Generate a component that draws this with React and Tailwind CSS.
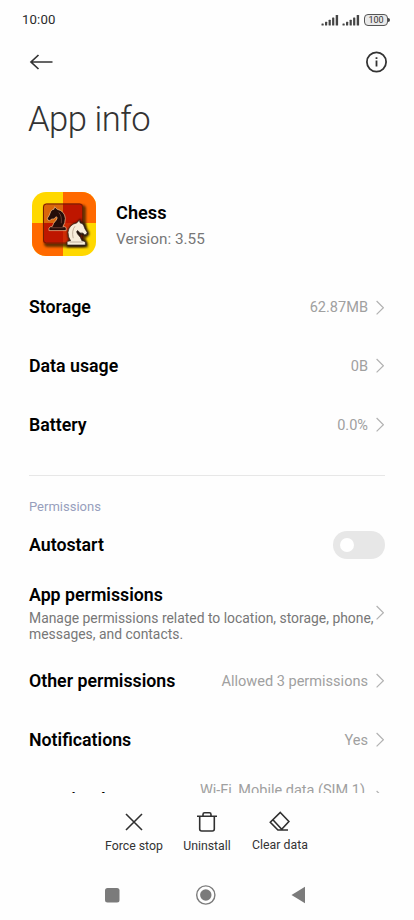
import React from 'react';

const storageRows = [
    { label: 'Storage', value: '62.87MB' },
    { label: 'Data usage', value: '0B' },
    { label: 'Battery', value: '0.0%' },
];

const permissionRows = [
    { label: 'Other permissions', value: 'Allowed 3 permissions' },
    { label: 'Notifications', value: 'Yes' },
];

const KNIGHT = 'M3 30 V27 Q4 25 7 25 Q8 21 12 17 Q14 14 12 13 Q9 17 6 16 L4 18 Q1 18 1 15 Q4 11 5 7 Q6 4 9 4 L10 1 L13 4 Q22 6 23 15 Q23 21 20 25 Q24 25 24 27 V30 Z';

function Chevron() {
    return (
        <svg className="w-2 h-4 shrink-0" viewBox="0 0 8 16" fill="none" stroke="#b2b2b2" strokeWidth="1.2">
            <path d="M0.6 1 L7.4 7.7 L0.6 14.4" />
        </svg>
    );
}

function SignalBars() {
    return (
        <svg className="w-[18px] h-3" viewBox="0 0 18 12" fill="#444">
            <rect x="0.5" y="9.5" width="2.2" height="2" rx="0.5" />
            <rect x="4" y="7.8" width="2.2" height="3.7" rx="0.5" />
            <rect x="7.6" y="5.8" width="2.2" height="5.7" rx="0.5" />
            <rect x="11.1" y="3.4" width="2.2" height="8.1" rx="0.5" />
            <rect x="14.7" y="0.9" width="2.4" height="10.6" rx="0.5" />
        </svg>
    );
}

function StatusBar() {
    return (
        <div className="h-10 pl-[22px] pr-6 flex items-center justify-between">
            <span className="text-[13.2px] text-[#2b2b2b] tracking-[0.15px]">10:00</span>
            <div className="flex items-center gap-[3px]">
                <SignalBars />
                <SignalBars />
                <div className="flex items-center ml-[1px]">
                    <div className="w-6 h-[12px] rounded-[4px] border border-[#555] bg-[#e9e9e9] flex items-center justify-center text-[9px] leading-none text-[#333]">100</div>
                    <div className="w-[2px] h-1 rounded-r bg-[#444]" />
                </div>
            </div>
        </div>
    );
}

function ChessIcon() {
    return (
        <svg className="w-16 h-16 shrink-0" viewBox="0 0 64 64">
            <defs>
                <clipPath id="tile"><rect width="64" height="64" rx="14" /></clipPath>
                <clipPath id="board"><rect x="11" y="11.5" width="40" height="40" rx="3" /></clipPath>
                <filter id="soft" x="-20%" y="-20%" width="150%" height="150%"><feGaussianBlur stdDeviation="1.3" /></filter>
            </defs>
            <g clipPath="url(#tile)">
                <path fill="#ffd800" d="M0 0H64V64H0z" />
                <path fill="#ff6900" d="M31 0H64V31H31zM0 31H31V64H0z" />
                <rect x="12" y="13" width="42" height="42" rx="4" fill="#422000" opacity="0.8" filter="url(#soft)" />
                <g clipPath="url(#board)">
                    <path fill="#d9660b" d="M11 11H31V31H11z" />
                    <path fill="#be1600" d="M31 11H52V31H31zM11 31H31V52H11z" />
                    <path fill="#cf2b05" d="M31 31H52V52H31z" />
                </g>
                <rect x="11.5" y="12" width="39" height="39" rx="3" fill="none" stroke="#722000" />
                <g transform="translate(14.5 14) scale(.82)">
                    <path d={KNIGHT} fill="#240d09" stroke="#ffc99a" strokeWidth="0.8" />
                    <path d="M15 8Q19 12 18 21M6 26.5H21" fill="none" stroke="#8a5546" strokeWidth="0.8" />
                </g>
            </g>
            <g transform="translate(56 27.5) scale(-.87 .85)">
                <path d={KNIGHT} fill="#201208" stroke="#201208" strokeWidth="3" filter="url(#soft)" transform="translate(-1 1)" />
                <path d={KNIGHT} fill="#f8eedb" stroke="#36261d" strokeWidth="0.8" />
                <path d="M15 8Q19 13 17 22M6 26.5H21" fill="none" stroke="#a8937f" strokeWidth="0.8" />
            </g>
        </svg>
    );
}

function Row({ label, value }) {
    return (
        <div className="h-[58.7px] pr-px flex items-center justify-between">
            <span className="text-[17.75px] font-semibold text-black">{label}</span>
            <div className="flex items-center gap-2">
                <span className="pt-px text-[14.55px] text-[#a0a0a0]">{value}</span>
                <Chevron />
            </div>
        </div>
    );
}

function Action({ label, className, children }) {
    return (
        <button className={`flex flex-col items-center ${className}`}>
            <svg className="w-6 h-6" viewBox="0 0 24 24" fill="none" stroke="#303030" strokeWidth="1.6">{children}</svg>
            <span className="mt-1 text-[12.3px] leading-4 text-[#333] whitespace-nowrap">{label}</span>
        </button>
    );
}

function App() {
    return (
        <div className="w-[414px] h-[920px] bg-[#fefefe] font-['Roboto',sans-serif] flex flex-col overflow-hidden">
            <StatusBar />
            <header className="h-11 pl-[29px] pr-[26px] flex items-center justify-between">
                <svg className="w-6 h-5" viewBox="0 0 24 20" fill="none" stroke="#333" strokeWidth="1.7">
                    <path d="M9.5 3 L2 10 L9.5 17 M2 10 H23.5" />
                </svg>
                <svg className="w-[23px] h-[23px]" viewBox="0 0 23 23" fill="none" stroke="#333" strokeWidth="1.8">
                    <circle cx="11.5" cy="11" r="9.6" />
                    <path d="M11.5 9.6 V15.6 M11.5 6.2 V8.1" />
                </svg>
            </header>

            <main className="h-[708.5px] px-[29px] overflow-hidden">
                <h1 className="-ml-px h-[72px] flex items-center text-[34.6px] font-light text-[#333] tracking-[-0.5px]">App info</h1>
                <div className="mt-9 ml-[3px] flex items-center gap-5">
                    <ChessIcon />
                    <div className="pt-1">
                        <h2 className="text-[18.2px] leading-6 font-semibold text-black">Chess</h2>
                        <p className="mt-[2px] text-[15.3px] leading-6 text-[#777]">Version: 3.55</p>
                    </div>
                </div>

                <section className="mt-[22.3px]">
                    {storageRows.map(row => <Row key={row.label} {...row} />)}
                </section>

                <section className="mt-[20.4px] border-t border-[#e7e7e7] pt-[22px]">
                    <h3 className="text-[13px] leading-[18px] text-[#979fbd]">Permissions</h3>
                    <div className="h-[58px] flex items-center justify-between">
                        <span className="pt-px text-[17.75px] font-semibold text-black">Autostart</span>
                        <button role="switch" aria-checked="false" className="w-[52px] h-7 rounded-full bg-[#e7e7e7] pl-[7px] flex items-center">
                            <span className="w-[14px] h-[14px] rounded-full bg-white" />
                        </button>
                    </div>
                    <div className="h-[77.5px] pr-px flex items-center">
                        <div className="flex-1 w-0">
                            <p className="-mt-[0.4px] text-[17.75px] leading-6 font-semibold text-black">App permissions</p>
                            <p className="mt-[2.8px] text-[13.9px] leading-4 text-[#777] whitespace-nowrap">
                                Manage permissions related to location, storage, phone,<br />messages, and contacts.
                            </p>
                        </div>
                        <Chevron />
                    </div>
                    <div className="pt-[0.8px]">
                        {permissionRows.map(row => <Row key={row.label} {...row} />)}
                    </div>
                    <div className="flex justify-between pr-px pt-[12.7px]">
                        <span className="pt-[6.3px] text-[17.75px] leading-6 font-semibold text-black">Restrict data usage</span>
                        <div className="flex gap-[11px]">
                            <span className="text-[14.5px] leading-[18px] text-[#a0a0a0]">Wi-Fi, Mobile data (SIM 1)</span>
                            <div className="pt-[8px]"><Chevron /></div>
                        </div>
                    </div>
                </section>
            </main>

            <div className="h-[77.5px] pt-[17px] pl-[105px] flex items-start">
                <Action label="Force stop" className="w-[58px]">
                    <path d="M4 4 L20 20 M20 4 L4 20" />
                </Action>
                <Action label="Uninstall" className="ml-[20px] w-[48px]">
                    <path d="M2 6.2 H22 M4.7 6.2 V19 Q4.7 21 6.7 21 H17.3 Q19.3 21 19.3 19 V6.2 M8 6 V4.4 Q8 2.8 9.6 2.8 H14.4 Q16 2.8 16 4.4 V6" />
                </Action>
                <Action label="Clear data" className="ml-[21px] -mt-px w-[56px]">
                    <path d="M12.3 3.5 L20.9 12.5 L13 21 H9.9 L2.3 13.3 Z M4.9 10.8 L13.7 20.3 M9.5 21 H20" />
                </Action>
            </div>

            <nav className="h-[50px] flex items-center pl-[105px]">
                <svg className="w-[202px] h-6" viewBox="0 0 202 24" fill="#7b7b7b">
                    <rect y="5" width="14.5" height="14.5" rx="2.5" />
                    <circle cx="100.8" cy="12" r="9.1" fill="none" stroke="#7b7b7b" strokeWidth="1.4" />
                    <circle cx="100.8" cy="12" r="5.7" />
                    <path d="M186.5 12 L200 3.8 V20.2 Z" />
                </svg>
            </nav>
        </div>
    );
}

export default App;
